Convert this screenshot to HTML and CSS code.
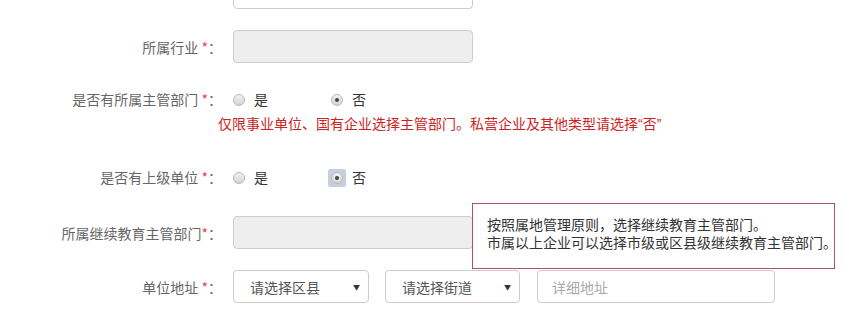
FILE: index.html
```html
<!DOCTYPE html>
<html lang="zh-CN">
<head>
    <meta charset="UTF-8">
    <title>单位信息</title>
    <link rel="stylesheet" href="styles.css">
</head>
<body>

    <form class="form">
        <div class="row row-first">
            <label class="label"></label>
            <div class="control"><input class="text-input" type="text"></div>
        </div>

        <div class="row row-industry">
            <label class="label">所属行业 <em>*</em>：</label>
            <div class="control"><input class="text-input" type="text" disabled></div>
        </div>

        <div class="row row-radio row-dept">
            <label class="label">是否有所属主管部门 <em>*</em>：</label>
            <div class="control radios">
                <span class="radio"><i class="dot"></i>是</span>
                <span class="radio checked"><i class="dot"></i>否</span>
            </div>
        </div>
        <p class="hint">仅限事业单位、国有企业选择主管部门。私营企业及其他类型请选择<span class="q">“</span>否<span class="q">”</span></p>

        <div class="row row-radio row-parent">
            <label class="label">是否有上级单位 <em>*</em>：</label>
            <div class="control radios">
                <span class="radio"><i class="dot"></i>是</span>
                <span class="radio checked focus"><i class="dot"></i>否</span>
            </div>
        </div>

        <div class="row row-edu">
            <label class="label">所属继续教育主管部门<em>*</em>：</label>
            <div class="control"><input class="text-input" type="text" disabled></div>
            <!-- 提示框 -->
            <div class="tip">
                <p>按照属地管理原则，选择继续教育主管部门。</p>
                <p>市属以上企业可以选择市级或区县级继续教育主管部门。</p>
            </div>
        </div>

        <div class="row row-address">
            <label class="label">单位地址 <em>*</em>：</label>
            <div class="control address">
                <div class="select select-district"><span>请选择区县</span><b>▼</b></div>
                <div class="select select-street"><span>请选择街道</span><b>▼</b></div>
                <input class="text-input detail" type="text" placeholder="详细地址">
            </div>
        </div>

        <div class="row row-radio row-last">
            <label class="label"></label>
            <div class="control radios">
                <span class="radio"><i class="dot"></i>是</span>
                <span class="radio"><i class="dot"></i>否</span>
            </div>
        </div>
    </form>

</body>
</html>
```

FILE: styles.css
```css
* {
    margin: 0;
    padding: 0;
    box-sizing: border-box;
}

body {
    font-family: "Noto Sans CJK SC", "Noto Sans", sans-serif;
    font-size: 14px;
    color: #333;
    background-color: #ffffff;
    overflow: hidden;
}

.form {
    margin-top: -24px;
}

/* Rows */
.row {
    display: flex;
    align-items: center;
    position: relative;
}

.label {
    width: 222px;
    flex-shrink: 0;
    text-align: right;
    color: #666;
    line-height: 20px;
    margin-right: 11px;
}

.label em {
    font-style: normal;
    color: #e0474c;
}

.row-first { margin-bottom: 21px; }
.row-industry { margin-bottom: 25px; }
.row-radio { height: 22px; }
.row-parent { margin-top: 34px; margin-bottom: 28px; }
.row-edu { margin-bottom: 21px; }
.row-last { margin-top: 33px; }

/* Inputs */
.text-input {
    width: 240px;
    height: 33px;
    border: 1px solid #ccc;
    border-radius: 4px;
    background-color: #fff;
    font-family: inherit;
    font-size: 14px;
    padding: 0 14px;
    color: #555;
}

.text-input:disabled {
    background-color: #eeeeee;
}

.text-input::placeholder {
    color: #aaa;
}

/* Radios */
.radios {
    display: flex;
    align-items: center;
}

.radio {
    display: flex;
    align-items: center;
    width: 98px;
    color: #333;
    line-height: 20px;
    position: relative;
    z-index: 0;
}

.radio .dot {
    width: 12px;
    height: 12px;
    border-radius: 50%;
    border: 1px solid #b8b8b8;
    background: linear-gradient(#f2f2f2, #d4d4d4);
    margin-right: 9px;
    position: relative;
    top: 1px;
}

.radio.checked .dot::after {
    content: "";
    position: absolute;
    left: 3px;
    top: 3px;
    width: 4px;
    height: 4px;
    border-radius: 50%;
    background-color: #444;
}

.radio.focus .dot::before {
    content: "";
    position: absolute;
    left: -4px;
    top: -4px;
    width: 18px;
    height: 18px;
    border-radius: 2px;
    background-color: #c5d0dc;
    z-index: -1;
}

.hint {
    color: #cc2424;
    padding-left: 218px;
    line-height: 16px;
    margin-top: 5px;
}

.hint .q {
    font-family: "Liberation Sans", sans-serif;
}

/* Tooltip */
.tip {
    position: absolute;
    left: 472px;
    top: -13px;
    width: 363px;
    height: 66px;
    border: 1px solid #a9575b;
    background-color: #fff;
    padding: 11px 0 0 14px;
    font-size: 14px;
    line-height: 18px;
    color: #333;
    white-space: nowrap;
}

/* Address */
.address {
    display: flex;
    align-items: center;
}

.select {
    height: 33px;
    border: 1px solid #ccc;
    border-radius: 4px;
    display: flex;
    align-items: center;
    justify-content: space-between;
    padding: 0 8px 0 16px;
    color: #555;
}

.select b {
    font-size: 7px;
    font-weight: normal;
    color: #333;
}

.select-district {
    width: 136px;
    margin-right: 16px;
}

.select-street {
    width: 135px;
    margin-right: 17px;
}

.text-input.detail {
    width: 238px;
}
```
